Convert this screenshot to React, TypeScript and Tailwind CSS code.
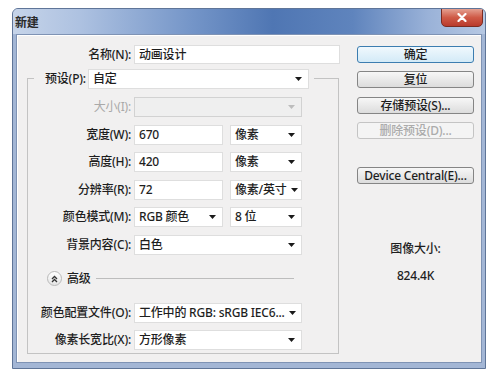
import React from "react";

const Arrow = ({ c = "#1a1a1a" }: { c?: string }) => (
  <svg width="7" height="4" viewBox="0 0 7 4" className="shrink-0">
    <path d="M0 0H7L3.5 4Z" fill={c} />
  </svg>
);

function Field({
  w,
  children,
  dd,
  disabled,
}: {
  w: string;
  children?: React.ReactNode;
  dd?: boolean;
  disabled?: boolean;
}) {
  return (
    <div
      className={
        w +
        " h-[20px] flex items-center justify-between gap-[4px] pl-[4px] pr-[6px] border " +
        (disabled ? "bg-[#efefef] border-[#d2d2d2]" : "bg-white border-[#dedede]")
      }
    >
      <span className="whitespace-nowrap">{children}</span>
      {dd ? <Arrow c={disabled ? "#bdbdbd" : "#1a1a1a"} /> : null}
    </div>
  );
}

function Row({
  label,
  children,
  disabled,
}: {
  label: string;
  children: React.ReactNode;
  disabled?: boolean;
}) {
  return (
    <div className="flex items-center h-[20px]">
      <div
        className={
          "w-[103px] mr-[3px] text-right whitespace-nowrap " +
          (disabled ? "text-[#a9a9a9] font-normal" : "text-[#1e1e1e]")
        }
      >
        {label}
      </div>
      <div className="flex gap-[7px]">{children}</div>
    </div>
  );
}

function Btn({
  children,
  primary,
  disabled,
  className = "",
}: {
  children: React.ReactNode;
  primary?: boolean;
  disabled?: boolean;
  className?: string;
}) {
  return (
    <div
      className={
        "h-[17px] w-[117px] rounded-[3px] border flex items-center justify-center whitespace-nowrap " +
        (primary
          ? "border-[#3c7db0] bg-[linear-gradient(#f0f8fd,#d3eaf7)] text-[#1e1e1e] "
          : disabled
          ? "border-[#c4c4c4] bg-[#f4f4f4] text-[#ababab] "
          : "border-[#858585] bg-[linear-gradient(#f7f7f7,#dcdcdc)] text-[#1e1e1e] ") +
        className
      }
    >
      {children}
    </div>
  );
}

export default function App() {
  return (
    <div className="w-[495px] h-[376px] bg-white pt-[8px] pl-[12px] font-['Noto_Sans','Noto_Sans_CJK_SC',sans-serif] font-medium tracking-[-0.2px] text-[12px] leading-[14px] text-[#1e1e1e]">
      <div className="w-[474px] h-[361px] rounded-t-[6px] border border-[#5f7598] bg-[#a3b6d5] flex flex-col overflow-hidden">
        {/* title bar */}
        <div className="h-[25px] shrink-0 flex justify-between items-start bg-[linear-gradient(90deg,#c6d4e9_0%,#aec2e1_14%,#7495c8_38%,#4f76b3_55%,#5f84bd_72%,#9ab2d8_88%,#b6c8e3_100%)]">
          <div className="pl-[2px] pt-[7px] text-[12px] font-bold text-[#2a2a2a]">新建</div>
          <div className="mr-[2px] -mt-[1px] w-[42px] h-[19px] rounded-b-[5px] border border-[#7b2b21] bg-[linear-gradient(#e4a091,#cf5a47_50%,#b93a2c)] flex items-center justify-center">
            <svg width="10" height="9" viewBox="0 0 10 9">
              <path d="M1.5 1L8.5 8M8.5 1L1.5 8" stroke="#fff" strokeWidth="2.2" strokeLinecap="round" />
            </svg>
          </div>
        </div>
        {/* client */}
        <div className="mx-[3px] h-[329px] border border-[#7f93b4] bg-[#f1f0f0] shadow-[inset_1px_1px_0_#ffffff] flex">
          {/* left */}
          <div className="pl-[10px] pt-[10px] flex flex-col w-[323px] shrink-0">
            <div className="flex items-center h-[19px]">
              <div className="w-[104px] mr-[3px] text-right">名称(N):</div>
              <div className="w-[206px] h-[19px] bg-white border border-[#dedede] flex items-center pl-[4px]">
                动画设计
              </div>
            </div>
            {/* group */}
            <div className="mt-[5px] w-[312px] flex flex-col">
              <div className="flex h-[20px]">
                <div className="w-[7px] mt-[9px] border-t border-l border-[#c3c3c3]" />
                <div className="flex items-center pl-[11px] pr-[5px]">
                  <div className="mr-[2px] whitespace-nowrap">预设(P):</div>
                  <Field w="w-[221px]" dd>
                    自定
                  </Field>
                </div>
                <div className="flex-1 mt-[9px] border-t border-r border-[#c3c3c3]" />
              </div>
              <div className="border-l border-r border-b border-[#c3c3c3] flex flex-col pt-[8px] pb-[3px]">
                <div className="flex flex-col gap-[7.5px]">
                  <Row label="大小(I):" disabled>
                    <Field w="w-[168px]" dd disabled />
                  </Row>
                  <Row label="宽度(W):">
                    <Field w="w-[89px]">670</Field>
                    <Field w="w-[72px]" dd>
                      像素
                    </Field>
                  </Row>
                  <Row label="高度(H):">
                    <Field w="w-[89px]">420</Field>
                    <Field w="w-[72px]" dd>
                      像素
                    </Field>
                  </Row>
                  <Row label="分辨率(R):">
                    <Field w="w-[89px]">72</Field>
                    <Field w="w-[72px]" dd>
                      像素/英寸
                    </Field>
                  </Row>
                  <Row label="颜色模式(M):">
                    <Field w="w-[89px]" dd>
                      RGB 颜色
                    </Field>
                    <Field w="w-[72px]" dd>
                      8 位
                    </Field>
                  </Row>
                  <Row label="背景内容(C):">
                    <Field w="w-[168px]" dd>
                      白色
                    </Field>
                  </Row>
                </div>
                {/* advanced */}
                <div className="mt-[17px] h-[14px] flex items-center pl-[19px]">
                  <div className="w-[15px] h-[15px] rounded-full border border-[#b9b9b9] bg-[linear-gradient(#ffffff,#e4e4e4)] flex items-center justify-center">
                    <svg width="7" height="8" viewBox="0 0 7 8">
                      <path d="M1 4L3.5 1.5L6 4M1 7L3.5 4.5L6 7" stroke="#333" strokeWidth="1.3" fill="none" />
                    </svg>
                  </div>
                  <div className="ml-[5px]">高级</div>
                  <div className="ml-[5px] w-[198px] h-px bg-[#bdbdbd]" />
                </div>
                <div className="mt-[17px] flex flex-col gap-[7px]">
                  <Row label="颜色配置文件(O):">
                    <Field w="w-[168px]" dd>
                      工作中的 RGB: sRGB IEC6...
                    </Field>
                  </Row>
                  <Row label="像素长宽比(X):">
                    <Field w="w-[168px]" dd>
                      方形像素
                    </Field>
                  </Row>
                </div>
              </div>
            </div>
          </div>
          {/* right */}
          <div className="ml-[17px] pt-[11px] flex flex-col w-[117px]">
            <Btn primary>确定</Btn>
            <Btn className="mt-[8px]">复位</Btn>
            <Btn className="mt-[9px]">存储预设(S)...</Btn>
            <Btn className="mt-[8px]" disabled>
              删除预设(D)...
            </Btn>
            <Btn className="mt-[28px]">Device Central(E)...</Btn>
            <div className="mt-[58px] text-center">图像大小:</div>
            <div className="mt-[13px] text-center">824.4K</div>
          </div>
        </div>
      </div>
    </div>
  );
}
